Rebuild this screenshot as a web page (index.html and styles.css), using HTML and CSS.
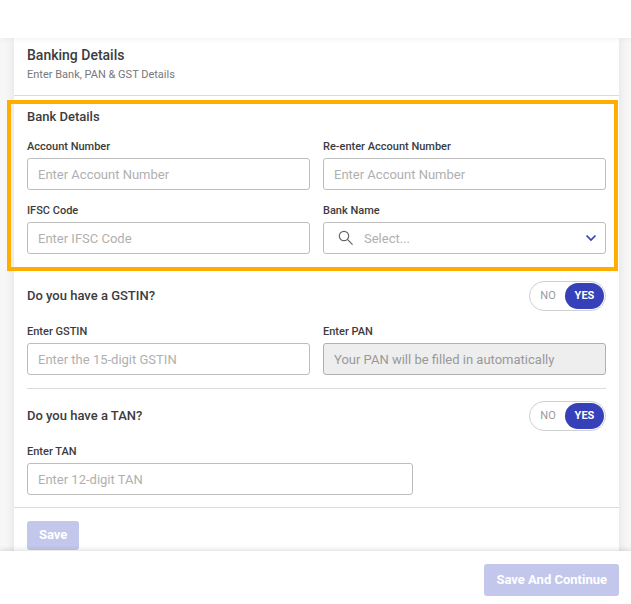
FILE: index.html
```html
<!DOCTYPE html>
<html lang="en">
<head>
  <meta charset="utf-8">
  <meta name="viewport" content="width=device-width, initial-scale=1">
  <title>Banking Details</title>
  <link rel="stylesheet" href="styles.css">
</head>
<body>
  <header class="topbar"></header>
  <main class="content">
    <form class="card" id="banking-form">
      <div class="card-header">
        <h1 class="title">Banking Details</h1>
        <p class="subtitle">Enter Bank, PAN &amp; GST Details</p>
      </div>

      <section class="bank-section">
        <h2 class="section-title">Bank Details</h2>
        <div class="fields">
          <div class="field">
            <label for="account">Account Number</label>
            <input class="control" id="account" type="text" placeholder="Enter Account Number">
          </div>
          <div class="field">
            <label for="account-confirm">Re-enter Account Number</label>
            <input class="control" id="account-confirm" type="text" placeholder="Enter Account Number">
          </div>
          <div class="field">
            <label for="ifsc">IFSC Code</label>
            <input class="control" id="ifsc" type="text" placeholder="Enter IFSC Code">
          </div>
          <div class="field">
            <label for="bank">Bank Name</label>
            <div class="select-wrap">
              <select class="control select" id="bank">
                <option>Select...</option>
              </select>
              <svg class="search-icon" viewBox="0 0 16 16" aria-hidden="true"><circle cx="6" cy="6" r="4.700"/><path d="M9.400 9.400 14.600 14.600"/></svg>
              <svg class="chevron" viewBox="0 0 12 8" aria-hidden="true"><path d="M1.500 1.500 6 6l4.500-4.500"/></svg>
            </div>
          </div>
        </div>
      </section>

      <section class="tax-section">
        <div class="question">
          <h2 class="section-title">Do you have a GSTIN?</h2>
          <div class="toggle" role="radiogroup" aria-label="Do you have a GSTIN?">
            <label class="choice"><input type="radio" name="has-gstin"><span>NO</span></label>
            <label class="choice"><input type="radio" name="has-gstin" checked><span>YES</span></label>
          </div>
        </div>
        <div class="fields">
          <div class="field">
            <label for="gstin">Enter GSTIN</label>
            <input class="control" id="gstin" type="text" placeholder="Enter the 15-digit GSTIN">
          </div>
          <div class="field">
            <label for="pan">Enter PAN</label>
            <input class="control" id="pan" type="text" placeholder="Your PAN will be filled in automatically" disabled>
          </div>
        </div>
      </section>

      <section class="tax-section divided">
        <div class="question">
          <h2 class="section-title">Do you have a TAN?</h2>
          <div class="toggle" role="radiogroup" aria-label="Do you have a TAN?">
            <label class="choice"><input type="radio" name="has-tan"><span>NO</span></label>
            <label class="choice"><input type="radio" name="has-tan" checked><span>YES</span></label>
          </div>
        </div>
        <div class="field tan-field">
          <label for="tan">Enter TAN</label>
          <input class="control" id="tan" type="text" placeholder="Enter 12-digit TAN">
        </div>
      </section>

      <div class="card-actions">
        <button class="button button-small" type="button">Save</button>
      </div>
    </form>
  </main>
  <footer class="bottombar">
    <button class="button" type="submit" form="banking-form">Save And Continue</button>
  </footer>
</body>
</html>
```
FILE: styles.css
```css
* {
  box-sizing: border-box;
}

body {
  display: flex;
  flex-direction: column;
  height: 100vh;
  margin: 0;
  background: #f7f7f7;
  color: #3c3c40;
  font-family: Roboto, "Liberation Sans", sans-serif;
  font-size: 13px;
}

h1,
h2,
p {
  margin: 0;
}

.topbar {
  position: relative;
  z-index: 1;
  flex: none;
  height: 38px;
  background: #fff;
  box-shadow: 0 1px 6px rgba(0, 0, 0, 0.06);
}

.content {
  flex: 1;
  min-height: 0;
  overflow: hidden;
  padding: 0 12px 0 14px;
}

.card {
  background: #fff;
  box-shadow: 0 0 10px rgba(0, 0, 0, 0.1);
}

.card-header {
  padding: 7px 13px 11px;
  border-bottom: 1px solid #dcdcdc;
}

.title {
  font-size: 14px;
  font-weight: 500;
  line-height: 20px;
}

.subtitle {
  color: #77777b;
  font-size: 11px;
  line-height: 19px;
}

.section-title {
  font-size: 13px;
  font-weight: 500;
  line-height: 16px;
}

.bank-section {
  position: relative;
  margin: 4px 1px 0 -7px;
  padding: 5px 8px 13px 16px;
  border: 4px solid #ffae00;
}

.bank-section .fields {
  margin-top: 13px;
}

.fields {
  display: grid;
  grid-template-columns: 1fr 1fr;
  gap: 12px 13px;
}

.field {
  display: flex;
  flex-direction: column;
  gap: 2px;
  min-width: 0;
}

.field > label {
  font-size: 11px;
  font-weight: 500;
  line-height: 18px;
}

.control {
  width: 100%;
  height: 32px;
  padding: 0 10px;
  border: 1px solid #bdbdbd;
  border-radius: 3px;
  background: #fff;
  color: #3c3c40;
  font: inherit;
}

.control::placeholder {
  color: #b0b0b0;
  opacity: 1;
}

.control:disabled {
  border-color: #b0b0b0;
  background: #eee;
}

.control:disabled::placeholder {
  color: #999;
}

.select-wrap {
  position: relative;
}

.select {
  display: block;
  padding: 0 36px 0 40px;
  appearance: none;
  color: #b0b0b0;
}

.search-icon,
.chevron {
  position: absolute;
  fill: none;
  pointer-events: none;
}

.search-icon {
  top: 8px;
  left: 15px;
  width: 16px;
  height: 16px;
  stroke: #66666a;
  stroke-width: 1.2;
}

.chevron {
  top: 12px;
  right: 9px;
  width: 12px;
  height: 8px;
  stroke: #3540b9;
  stroke-width: 1.7;
}

.tax-section {
  margin: 0 13px;
  padding: 10px 0 13px;
}

.divided {
  padding: 12px 0;
  border-top: 1px solid #dcdcdc;
}

.question {
  display: flex;
  align-items: center;
  justify-content: space-between;
  margin-bottom: 12px;
}

.toggle {
  display: flex;
  padding: 1px;
  border: 1px solid #d0d0d0;
  border-radius: 15px;
  background: #fff;
}

.choice {
  position: relative;
  cursor: pointer;
}

.choice input {
  position: absolute;
  inset: 0;
  margin: 0;
  opacity: 0;
}

.choice span {
  display: block;
  min-width: 34px;
  border-radius: 13px;
  color: #9a9aa2;
  font-size: 11px;
  line-height: 26px;
  text-align: center;
}

.choice input:checked + span {
  min-width: 39px;
  background: #3540b9;
  color: #fff;
  font-weight: 700;
}

.tan-field {
  width: 66.7%;
}

.card-actions {
  padding: 13px 13px 16px;
  border-top: 1px solid #dcdcdc;
}

.button {
  height: 32px;
  padding: 0 12px 2px;
  border: 0;
  border-radius: 3px;
  background: #c3c7ec;
  color: #fff;
  font: inherit;
  font-weight: 700;
}

.button-small {
  display: block;
  height: 29px;
}

.bottombar {
  position: relative;
  z-index: 1;
  display: flex;
  flex: none;
  justify-content: flex-end;
  padding: 13px 12px 8px;
  background: #fff;
  box-shadow: 0 -1px 5px rgba(0, 0, 0, 0.14);
}
```
